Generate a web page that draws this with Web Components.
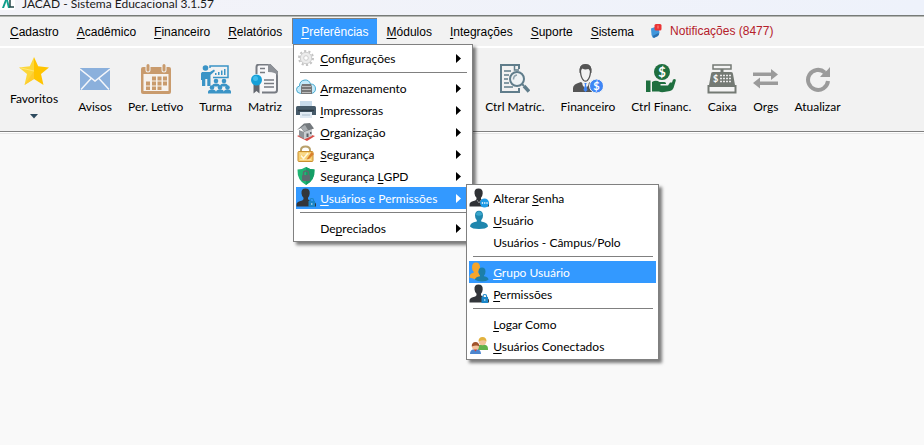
<!DOCTYPE html>
<html lang="pt-BR">
<head>
<meta charset="utf-8">
<meta name="viewport" content="width=device-width, initial-scale=1">
<title>JACAD - Sistema Educacional 3.1.57</title>
<style>
  :root {
    --accent: #3399ff;
    --bar: #f2f2f2;
    --line: #808080;
    --ui-font: Lato, "Open Sans", sans-serif;
    --menu-font: "Liberation Sans", Arial, sans-serif;
  }
  body {
    margin: 0;
    min-height: 100vh;
    background: #f9f9f9;
    color: #000;
    font: 12px/16px var(--ui-font);
  }
</style>
</head>
<body>
<app-titlebar>JACAD - Sistema Educacional 3.1.57</app-titlebar>

<menu-bar>
  <menu-entry><u>C</u>adastro</menu-entry>
  <menu-entry><u>A</u>cadêmico</menu-entry>
  <menu-entry><u>F</u>inanceiro</menu-entry>
  <menu-entry><u>R</u>elatórios</menu-entry>
  <menu-entry open><u>P</u>referências
    <menu-popup slot="popup">
      <menu-row icon="gear" submenu><u>C</u>onfigurações</menu-row>
      <menu-divider></menu-divider>
      <menu-row icon="cloud" submenu><u>A</u>rmazenamento</menu-row>
      <menu-row icon="printer" submenu><u>I</u>mpressoras</menu-row>
      <menu-row icon="house" submenu><u>O</u>rganização</menu-row>
      <menu-row icon="padlock" submenu><u>S</u>egurança</menu-row>
      <menu-row icon="shield" submenu>Segurança <u>L</u>GPD</menu-row>
      <menu-row icon="user-lock" submenu active><u>U</u>suários e Permissões
        <menu-popup slot="popup" side>
          <menu-row icon="user-dots">Alterar <u>S</u>enha</menu-row>
          <menu-row icon="user"><u>U</u>suário</menu-row>
          <menu-row>Usuários - Câmpus/Polo</menu-row>
          <menu-divider></menu-divider>
          <menu-row icon="group" active><u>G</u>rupo Usuário</menu-row>
          <menu-row icon="user-lock"><u>P</u>ermissões</menu-row>
          <menu-divider></menu-divider>
          <menu-row><u>L</u>ogar Como</menu-row>
          <menu-row icon="people"><u>U</u>suários Conectados</menu-row>
        </menu-popup>
      </menu-row>
      <menu-divider></menu-divider>
      <menu-row submenu>De<u>p</u>reciados</menu-row>
    </menu-popup>
  </menu-entry>
  <menu-entry><u>M</u>ódulos</menu-entry>
  <menu-entry><u>I</u>ntegrações</menu-entry>
  <menu-entry><u>S</u>uporte</menu-entry>
  <menu-entry><u>S</u>istema</menu-entry>
  <menu-notice>Notificações (8477)</menu-notice>
</menu-bar>

<tool-bar>
  <tool-button slot="favorites" icon="star" drop>Favoritos</tool-button>
  <tool-button icon="mail">Avisos</tool-button>
  <tool-button icon="calendar">Per. Letívo</tool-button>
  <tool-button icon="class">Turma</tool-button>
  <tool-button icon="diploma">Matriz</tool-button>
  <tool-button slot="end" icon="search-doc">Ctrl Matríc.</tool-button>
  <tool-button slot="end" icon="cashier">Financeiro</tool-button>
  <tool-button slot="end" icon="hand-coin">Ctrl Financ.</tool-button>
  <tool-button slot="end" icon="register">Caixa</tool-button>
  <tool-button slot="end" icon="swap">Orgs</tool-button>
  <tool-button slot="end" icon="refresh">Atualizar</tool-button>
</tool-bar>

<script>
// Bust silhouette shared by the user icons
const BUST = 'M5.500 5.500Q5 .5 9.500.5t4.200 5q-.2 2.700-1.700 4.200v1.500q1.200 1.300 4.500 2t3.500 3.300v2H.5v-2q.2-2.600 3.300-3.300t3.700-2V9.700Q5.800 8.200 5.500 5.500z';

const ICONS = {
  logo: [16, 14, `
    <path d="M0 0h15v8q0 2-2 2H0z" fill="#fff"/>
    <path d="M2 8 5 0h2L4 8z" fill="#0f9d8a"/>
    <path d="M6 0h2l2 8H8z" fill="#12a58f"/>
    <path d="M10 0v7h4" fill="none" stroke="#23474a" stroke-width="1.500"/>`],
  bell: [12, 16, `
    <path d="M1 5.500 5 4l4 3 .5 3-2 3.500L3 15l-1.500-3z" fill="#3f97dc"/>
    <path d="m2.500 13 6-3 .5 2-5 3z" fill="#2b6fae"/>
    <rect x="4.500" y="1" width="7" height="6.500" rx="1.500" fill="#ea3434"/>
    <path d="M8 2.500v3" stroke="#ff8f8f"/>`],
  star: [30, 28, `
    <path d="m15 0 4.200 9.300L30 10.400l-8 6.600 2.500 11L15 22z" fill="#ffc400"/>
    <path d="M15 0v22l-9.500 6L8 17 0 10.400l10.800-1.100z" fill="#fcd73a"/>
    <path d="M15 14 5.500 28 15 22z" fill="#ffcb2e"/><path d="M15 14 2 11" stroke="#ffe988" stroke-width=".8"/>`],
  mail: [30, 30, `
    <path d="M0 4h30v22H0z" fill="#8bb0dc"/>
    <path d="m0 5 15 12L30 5M1 25.500 11.500 14M29 25.500 18.500 14" fill="none" stroke="#f4f6fa" stroke-width="1.500"/>`],
  calendar: [30, 30, `
    <path d="M2 3h26q2 0 2 2v23q0 2-2 2H2q-2 0-2-2V5q0-2 2-2z" fill="#c99b6d"/>
    <path d="M2.500 10h25v17h-25z" fill="#f6f2ee"/>
    <path d="M7 2v4M23 2v4" stroke="#f2f2f2" stroke-width="5" stroke-linecap="round"/>
    <path d="M7 1.500V6M23 1.500V6" stroke="#c99b6d" stroke-width="3" stroke-linecap="round"/>
    <path d="M11 12.500h4v4h-4zm5.500 0h4v4h-4zm5.500 0h4v4h-4zM5 17.500h4v4H5zm6 0h4v4h-4zm5.500 0h4v4h-4zm5.500 0h4v4h-4zM5 22.500h4v3.500H5zm6 0h4v3.500h-4zm5.500 0h4v3.500h-4z" fill="#c99b6d"/>`],
  class: [30, 30, `
    <g fill="#3b94c6"><circle cx="4.500" cy="4" r="2.800"/>
    <path d="M1 8h8l4-2.500 1 1.500-4.500 4V22H6.300v-7h-2v7H1v-6H0V9.500z"/>
    <circle cx="15" cy="17" r="2.300"/><circle cx="23" cy="17" r="2.300"/>
    <path d="M11 22.500q0-3 4-3t4 3q0-3 4-3t4 3z"/>
    <circle cx="11" cy="23.500" r="2.300"/><circle cx="19" cy="23.500" r="2.300"/><circle cx="26.500" cy="23.500" r="2.300"/>
    <path d="M7 29.500V28q0-2.500 4-2.500t4 2.500q0-2.500 4-2.500t3.800 2.500q0-2.500 3.700-2.500T30 28v1.500z"/>
    <path d="M14 11h1.500V9H14zm3 0h1.500V8H17zm3 0h1.500V6.500H20zm3 0h1.500V5H23z"/></g>
    <path d="M9 4V2h18v11.500H12" fill="none" stroke="#3b94c6" stroke-width="1.500"/>`],
  diploma: [28, 30, `
    <path d="M5.500 10V3q0-2.500 2.500-2.500h10.500L26 8v18q0 2.500-2.500 2.500H11" fill="#f7f7f9" stroke="#777b82" stroke-width="2"/>
    <path d="M17 0h2l8 8v4q-2-4-10-4z" fill="#8d9197"/>
    <path d="M9 4.500h5M9 8.500h5M13 16h10M13 19.500h10M13 23h10" stroke="#777b82" stroke-width="1.500"/>
    <path d="M2.500 20v9.500l3-2.500 3 2.500V20z" fill="#62666e"/>
    <circle cx="5.500" cy="16" r="5.500" fill="#15a0d8"/><circle cx="4.500" cy="14.500" r="2.500" fill="#41bdec"/>`],
  "search-doc": [30, 30, `
    <path d="M19 5V1H1v27h18v-4" fill="none" stroke="#607d8b" stroke-width="2"/>
    <path d="M14.500 1v5H19" fill="none" stroke="#607d8b" stroke-width="1.500"/>
    <path d="M4 7h7M4 11h5M4 15h4M4 19h5M4 23h9" stroke="#607d8b" stroke-width="1.500"/>
    <circle cx="17" cy="15" r="7" fill="#eef2f4" stroke="#607d8b" stroke-width="2"/>
    <path d="M13.500 15.500q0-4 3.500-4.500" fill="none" stroke="#8fa3ad" stroke-width="1.500"/>
    <path d="m22 20 2 2" stroke="#607d8b" stroke-width="2"/><path d="m24 22 5 5.500" stroke="#607d8b" stroke-width="3.500"/>`],
  cashier: [30, 30, `
    <path d="M0 28v-4q0-4 8-6l4.500 4 4.500-4q7 2 8 5v5z" fill="#555"/>
    <path d="M9.500 17h6v4l-3 4-3-4z" fill="#f2f2f2"/>
    <path d="M7.500 8Q6.500 1 12.500 1t5 7q-.5 6-3.200 8.500-1.800 1.300-3.600 0Q8 14 7.500 8z" fill="#f2f2f2" stroke="#555" stroke-width="1.300"/>
    <path d="M6.500 9Q5.500 0 12.500 0t6 9l-1.200-.5Q17 6 15.500 5q-4 1-6-.5Q8 5 7.700 8.500z" fill="#555"/>
    <path d="m11.300 19h2.400l-.7 2 1.500 5-2 2-2-2 1.500-5z" fill="#3f86f5"/>
    <circle cx="23.500" cy="22" r="7" fill="#3f86f5" stroke="#f2f2f2"/>
    <text x="23.500" y="26" font-size="11" font-weight="bold" text-anchor="middle" fill="#fff">$</text>`],
  "hand-coin": [30, 30, `
    <circle cx="16" cy="8" r="8" fill="#1f6f3f"/>
    <text x="16" y="13" font-size="13" font-weight="bold" text-anchor="middle" fill="#fff">$</text>
    <path d="M0 16.500h4.500V28H0z" fill="#1f6f3f"/>
    <path d="M6 18q4-2.500 7.500 0h5q2 .5 1.500 2h-5.500v1.500H22l2-3h2l1-3q3-1.500 2.800 1L27.500 24q-1 2.500-3.500 3l-6 1q-3 .5-5-.5H6z" fill="#1f6f3f"/>`],
  register: [30, 30, `
    <path d="M6 1h18v4H6z" fill="#f4f4f4" stroke="#747a74" stroke-width="1.500"/>
    <path d="M13.500 5h3v4h-3zM6 8h18q2 0 2 2l2 11H2L4 10q0-2 2-2z" fill="#747a74"/>
    <path d="M1.500 22h27v6.500h-27z" fill="#f4f4f4" stroke="#747a74" stroke-width="2"/>
    <path d="M13 11.500h11M13 14.500h11M13 17.500h12" stroke="#e8e8e8" stroke-width="1.500" stroke-dasharray="2 1"/>
    <text x="8.500" y="18" font-size="9" font-weight="bold" text-anchor="middle" fill="#fff">$</text>`],
  swap: [25, 30, `
    <g fill="#9b9b9b"><path d="M0 8.500h18V5l7 5.500-7 5.500v-4H0z"/><path d="M25 21H7v3.500L0 19l7-5.500v4h18z"/></g>`],
  refresh: [26, 30, `
    <path d="M19.800 8.500A10 10 0 1 0 23 17" fill="none" stroke="#9b9b9b" stroke-width="4"/>
    <path d="M25 3v10H15l4-4.500 3-2z" fill="#9b9b9b"/>`],
  gear: [20, 20, `
    <circle cx="10" cy="10" r="7" fill="none" stroke="#c4c4c4" stroke-width="2" stroke-dasharray="2.200 2.200"/>
    <circle cx="10" cy="10" r="5.700" fill="#ececec" stroke="#cdcdcd"/><circle cx="10" cy="10" r="2.300" fill="#fff" stroke="#cdcdcd"/>`],
  cloud: [20, 20, `
    <path d="M4.500 15.500Q.5 15 .5 11.500.5 8.500 3.500 8 3.500 2.500 9 2q4-.3 5.500 4 5 0 5 5-.2 4-4.500 4.500z" fill="#c4eafa" stroke="#48a9cf"/>
    <path d="M6 6h9l1 3v7H5V9z" fill="#777"/><path d="M6 8.500h9M6 11.500h9M6 14.500h9" stroke="#bbb"/>`],
  printer: [20, 20, `
    <path d="M4 1h12v7H4z" fill="#c9dcec"/><path d="M1.500 6h17Q20 6 20 7.500V15H0V7.500Q0 6 1.500 6z" fill="#465a69"/>
    <path d="M2 10.500h16" stroke="#2e3c47" stroke-width="1.500"/><path d="M4 12h12v6H4z" fill="#e0eaf3"/><path d="M6 15h8" stroke="#a9bccb"/>`],
  house: [20, 20, `
    <path d="m1 14 8-3 10 3-8 5z" fill="#d84b45"/><path d="M3 8 8 10v7l-5-3z" fill="#8f9498"/>
    <path d="m8 10 8-3v7l-8 3.500z" fill="#c9cdd0"/><path d="m1 8 7-6.500L14 1l4 5.500L8 10 5 6z" fill="#74797d"/>
    <path d="M5 5.500 9 3l3 5-4 1.500z" fill="#a7acb0"/><path d="M10.500 11.500h2v3.500h-2zm3.500-1.500h1.500v2H14z" fill="#596066"/>`],
  padlock: [20, 20, `
    <path d="M5 8.500V6q0-3.500 4.500-3.500T14 6v2.500" fill="none" stroke="#b9a06a" stroke-width="2"/>
    <rect x="2" y="7.500" width="15" height="10" rx="1" fill="#f6cf72" stroke="#c98f2e"/>
    <path d="M4 10h11M4 15.500h11" stroke="#fbe3a3"/><path d="m5 11.500 2.500 3L12 9" fill="none" stroke="#fff8df" stroke-width="1.500"/><path d="m15.500 8 2.500 2-5 5-2.500.5z" fill="#d9812e"/>`],
  shield: [20, 20, `
    <path d="M10 1q4 2.500 8.500 2.500.5 11-8.500 15.500Q1 14.500 1.500 3.500 6 3.500 10 1z" fill="#20b573"/>
    <path d="M10 1q4 2.500 8.500 2.500.5 11-8.500 15.500z" fill="#159e66"/>
    <path d="M7.500 9.500V7q0-2 2.500-2t2.500 2v2.500" fill="none" stroke="#5c6b6f" stroke-width="1.500"/><rect x="6" y="9" width="8" height="6" rx="1" fill="#5c6b6f"/>`],
  "user-lock": [20, 20, `
    <path d="${BUST}" fill="#33363b"/>
    <path d="M14 13.500v-1.300q0-1.700 1.800-1.700t1.800 1.700v1.300" fill="none" stroke="#1b86c8" stroke-width="1.200"/><path d="M12.500 13H19v6h-6.500z" fill="#1b86c8"/><path d="M15.800 15v2" stroke="#bfe3f7"/>`],
  "user-dots": [20, 20, `
    <path d="${BUST}" fill="#303236"/><path d="m8 12 2 3 2-3" fill="none" stroke="#8b8d90"/>
    <circle cx="15.500" cy="15" r="4.500" fill="#1e9be6"/><path d="M12.800 15h6" stroke="#fff" stroke-width="1.300" stroke-dasharray="1.300 1"/>`],
  user: [20, 20, `
    <path d="M6 5.500Q6 .8 10 .8t4 4.700q0 3.500-1.800 4.800v1.200q6.800 1 6.800 5-2 2.500-9 2.500t-9-2.500q0-4 6.800-5v-1.200Q6 9 6 5.500z" fill="#1f86ad"/>
    <path d="M7 5q0-3.500 3-3.500T13 5q-3 1.500-6 0z" fill="#39a6cc"/>`],
  group: [20, 20, `
    <path d="M3 5.500Q3 .5 7 .5t4 5q0 3-1.700 4.300v1q4 .7 4 4.700l-6 2-6.800-2q0-4 4.200-4.700v-1Q3 8.500 3 5.500z" fill="#f5a52a"/>
    <path d="M9.500 9.500q0-4 3.500-4t3.500 4q0 2.500-1.500 4v.8q4.500.7 4.500 3.500-2 1.700-6.500 1.700t-7-1.700q0-2.800 5-3.500v-.8q-1.500-1.500-1.500-4z" fill="#1c7fa8"/>`],
  people: [20, 20, `
    <path d="M8 12q0-3.500 5.500-3.500t5.500 4v1.500H9z" fill="#62b14b"/><circle cx="13.500" cy="5.500" r="3.700" fill="#f3c29a"/><path d="M9.500 5.500Q9.500 1 13.500 1t4 4.500Q15 3 9.500 5.500z" fill="#e2b23e"/>
    <path d="M1 18q0-5 5.500-5t5.500 5z" fill="#4d86cf"/><circle cx="6.500" cy="10.500" r="3.500" fill="#f3c29a"/><path d="M2.700 10.500q0-4.500 3.800-4.500t3.800 4.500Q8 8.500 2.700 10.500z" fill="#a1532c"/><path d="m5 13.500 1.500 2 1.500-2z" fill="#d8382f"/>`]
};

/** AppIcon - inline SVG picked by name. */
class AppIcon extends HTMLElement {
  connectedCallback() {
    const icon = ICONS[this.getAttribute('name')];
    if (!icon) return;
    const [w, h, body] = icon;
    this.attachShadow({ mode: 'open' }).innerHTML = `
      <style>
        :host { display: block; flex: none; }
        svg { display: block; font-family: Lato, sans-serif; }
      </style>
      <svg width="${w}" height="${h}" viewBox="0 0 ${w} ${h}" aria-hidden="true">${body}</svg>
    `;
  }
}

/** AppTitlebar - window caption, partly above the visible area. */
class AppTitlebar extends HTMLElement {
  connectedCallback() {
    this.attachShadow({ mode: 'open' }).innerHTML = `
      <style>
        :host {
          display: flex;
          align-items: flex-start;
          gap: 6px;
          height: 15px;
          overflow: hidden;
          background: linear-gradient(90deg, #f3f3f8, #eef2fb);
          border-bottom: 1px solid #777b78;
        }
        span { line-height: 8px; color: #1a1a1a; white-space: nowrap; }
      </style>
      <app-icon name="logo"></app-icon>
      <span><slot></slot></span>
    `;
  }
}

/** MenuBar - main menu strip. */
class MenuBar extends HTMLElement {
  connectedCallback() {
    this.attachShadow({ mode: 'open' }).innerHTML = `
      <style>
        :host {
          display: block;
          border-top: 1px solid #b4b6b2;
          border-bottom: 2px solid #fff;
          background: var(--bar);
          font-family: var(--menu-font);
        }
        nav { display: flex; gap: 2px; padding: 1px 2px 2px; }
      </style>
      <nav><slot></slot></nav>
    `;
  }
}

/** MenuEntry - top level menu; "open" shows its popup. */
class MenuEntry extends HTMLElement {
  connectedCallback() {
    const open = this.hasAttribute('open');
    this.attachShadow({ mode: 'open' }).innerHTML = `
      <style>
        :host { display: block; position: relative; }
        :host([open]) { border-left: 1px solid var(--line); }
        button {
          display: block;
          height: 26px;
          padding: 1px 8px 0;
          border: 0;
          background: none;
          color: #000;
          font: inherit;
          white-space: nowrap;
        }
        :host([open]) button {
          background: var(--accent);
          color: #fff;
          box-shadow: inset 0 1px var(--line);
        }
        ::slotted(u) { text-underline-offset: 2px; text-decoration-thickness: 1px; }
        .popup { display: none; position: absolute; top: 100%; left: 0; z-index: 10; }
        :host([open]) .popup { display: block; }
      </style>
      <button aria-haspopup="menu" aria-expanded="${open}"><slot></slot></button>
      <div class="popup"><slot name="popup"></slot></div>
    `;
  }
}

/** MenuNotice - notification counter at the end of the menu bar. */
class MenuNotice extends HTMLElement {
  connectedCallback() {
    this.attachShadow({ mode: 'open' }).innerHTML = `
      <style>
        :host { display: block; }
        button {
          display: flex;
          align-items: center;
          gap: 8px;
          height: 26px;
          padding: 0 6px;
          border: 0;
          background: none;
          color: #b5202a;
          font: inherit;
          white-space: nowrap;
        }
      </style>
      <button><app-icon name="bell"></app-icon><slot></slot></button>
    `;
  }
}

/** MenuPopup - drop-down panel; "side" is for nested ones. */
class MenuPopup extends HTMLElement {
  connectedCallback() {
    this.attachShadow({ mode: 'open' }).innerHTML = `
      <style>
        :host {
          display: block;
          box-sizing: border-box;
          width: max-content;
          min-width: 180px;
          padding: 2px;
          border: 1px solid var(--line);
          background: #fff;
          box-shadow: 3px 3px 3px rgba(0, 0, 0, 0.5);
          color: #000;
          font-family: var(--ui-font);
        }
        :host([side]) { min-width: 193px; }
      </style>
      <div role="menu"><slot></slot></div>
    `;
  }
}

/** MenuRow - one command of a popup. */
class MenuRow extends HTMLElement {
  connectedCallback() {
    const icon = this.getAttribute('icon') || '';
    const submenu = this.hasAttribute('submenu');
    this.attachShadow({ mode: 'open' }).innerHTML = `
      <style>
        :host { display: block; position: relative; }
        button {
          display: grid;
          grid-template-columns: 20px 1fr auto;
          align-items: center;
          gap: 4px;
          width: 100%;
          height: 22px;
          padding: 0 9px 0 0;
          border: 0;
          background: none;
          color: #000;
          font: inherit;
          text-align: left;
          white-space: nowrap;
        }
        :host([active]) button { background: var(--accent); color: #fff; }
        span { padding-top: 2px; }
        ::slotted(u) { text-underline-offset: 2px; text-decoration-thickness: 1px; }
        .arrow { fill: currentColor; }
        .popup { position: absolute; top: -3px; left: calc(100% - 4px); z-index: 1; }
      </style>
      <button role="menuitem">
        <app-icon name="${icon}"></app-icon>
        <span><slot></slot></span>
        ${submenu ? '<svg class="arrow" width="5" height="9" viewBox="0 0 5 9" aria-hidden="true"><path d="M0 0l5 4.500L0 9z"/></svg>' : ''}
      </button>
      <div class="popup"><slot name="popup"></slot></div>
    `;
  }
}

class MenuDivider extends HTMLElement {
  connectedCallback() {
    this.attachShadow({ mode: 'open' }).innerHTML = `
      <style>
        :host { display: block; padding: 3px 3px 4px 4px; }
        hr { margin: 0; border: 0; border-top: 1px solid var(--line); }
      </style>
      <hr>
    `;
  }
}

/** ToolBar - favourites, then two groups of shortcuts. */
class ToolBar extends HTMLElement {
  connectedCallback() {
    this.attachShadow({ mode: 'open' }).innerHTML = `
      <style>
        :host {
          display: block;
          background: var(--bar);
          border-bottom: 1px solid var(--line);
          box-shadow: 0 1px #fff, 0 2px #e6e6e6;
        }
        .tools {
          display: grid;
          grid-template-columns: auto 387px auto;
          justify-content: start;
          gap: 20px;
          padding: 9px 10px 12px;
        }
        .group { display: flex; gap: 16px; padding-top: 7px; }
      </style>
      <div class="tools" role="toolbar">
        <slot name="favorites"></slot>
        <div class="group"><slot></slot></div>
        <div class="group"><slot name="end"></slot></div>
      </div>
    `;
  }
}

/** ToolButton - icon over a caption, "drop" adds an arrow. */
class ToolButton extends HTMLElement {
  connectedCallback() {
    const icon = this.getAttribute('icon');
    const drop = this.hasAttribute('drop');
    this.attachShadow({ mode: 'open' }).innerHTML = `
      <style>
        :host { display: block; }
        button {
          display: flex;
          flex-direction: column;
          align-items: center;
          gap: ${drop ? '6px' : '5px'};
          padding: 0;
          border: 0;
          background: none;
          color: #000;
          font: inherit;
          white-space: nowrap;
        }
        svg { display: block; }
      </style>
      <button>
        <app-icon name="${icon}"></app-icon>
        <span><slot></slot></span>
        ${drop ? '<svg width="10" height="6" viewBox="0 0 10 6" aria-hidden="true"><path d="M1 1h8L5 5.500z" fill="#2d4a5e"/></svg>' : ''}
      </button>
    `;
  }
}

customElements.define('app-icon', AppIcon);
customElements.define('app-titlebar', AppTitlebar);
customElements.define('menu-bar', MenuBar);
customElements.define('menu-entry', MenuEntry);
customElements.define('menu-notice', MenuNotice);
customElements.define('menu-popup', MenuPopup);
customElements.define('menu-row', MenuRow);
customElements.define('menu-divider', MenuDivider);
customElements.define('tool-bar', ToolBar);
customElements.define('tool-button', ToolButton);
</script>
</body>
</html>
